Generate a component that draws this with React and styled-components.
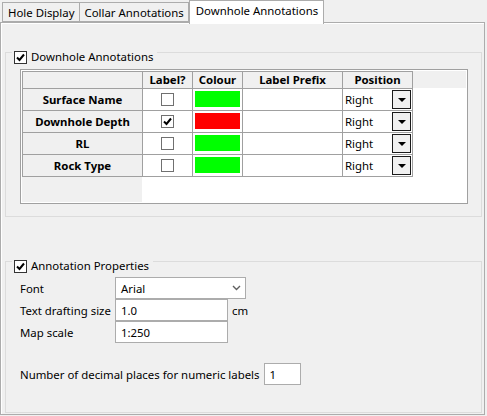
import styled, { createGlobalStyle } from "styled-components";

const GlobalStyle = createGlobalStyle`
  html, body {
    margin: 0;
    padding: 0;
    background: #f0f0f0;
  }
  body {
    font-family: "Noto Sans", "DejaVu Sans", sans-serif;
    font-size: 11.4px;
    color: #000;
  }
`;

const columns = ["", "Label?", "Colour", "Label Prefix", "Position"];

const rows = [
  { name: "Surface Name", checked: false, colour: "#00ff00" },
  { name: "Downhole Depth", checked: true, colour: "#ff0000" },
  { name: "RL", checked: false, colour: "#00ff00" },
  { name: "Rock Type", checked: false, colour: "#00ff00" },
];

const CheckMark = () => (
  <svg width="9" height="9" viewBox="0 0 9 9">
    <path d="M1 4.5 L3.5 7 L8 1.5" fill="none" stroke="#000" strokeWidth="2" />
  </svg>
);

const DownTriangle = () => (
  <svg width="8" height="4" viewBox="0 0 8 4">
    <path d="M0 0 H8 L4 4 Z" fill="#000" />
  </svg>
);

const Chevron = () => (
  <svg width="9" height="6" viewBox="0 0 9 6">
    <path d="M1 1 L4.5 4.5 L8 1" fill="none" stroke="#606060" strokeWidth="1.4" />
  </svg>
);

const App = () => {
  return (
    <Window>
      <GlobalStyle />
      <TabBar>
        <Tab>Hole Display</Tab>
        <Tab>Collar Annotations</Tab>
        <Tab $active>Downhole Annotations</Tab>
      </TabBar>
      <Panel>
        <GroupBox $top={29} $pad="16px 14px 12px 14px">
          <GroupTitle>
            <CheckBox $dark>
              <CheckMark />
            </CheckBox>
            Downhole Annotations
          </GroupTitle>
          <GridFrame>
            <DataGrid>
              {columns.map((c, i) => (
                <HeadCell key={i} $right={i === 4}>
                  {c}
                </HeadCell>
              ))}
              <Filler $gray />
              {rows.map((r, i) => {
                const last = i === rows.length - 1;
                return [
                  <RowHead key={r.name} $last={last}>
                    {r.name}
                  </RowHead>,
                  <Cell key={r.name + "-l"} $last={last} $center>
                    <CheckBox>{r.checked && <CheckMark />}</CheckBox>
                  </Cell>,
                  <Cell key={r.name + "-c"} $last={last} $pad="2px 2px 3px 2px">
                    <Swatch $colour={r.colour} />
                  </Cell>,
                  <Cell key={r.name + "-p"} $last={last} />,
                  <Cell key={r.name + "-s"} $last={last} $right $pad="0 1px 0 2px">
                    Right
                    <DropButton>
                      <DownTriangle />
                    </DropButton>
                  </Cell>,
                  <Filler key={r.name + "-f"} />,
                ];
              })}
              <Filler $gray />
              <Filler $span={5} />
            </DataGrid>
          </GridFrame>
        </GroupBox>

        <GroupBox $top={44} $pad="15px 14px 0 14px" $grow>
          <GroupTitle>
            <CheckBox $dark>
              <CheckMark />
            </CheckBox>
            Annotation Properties
          </GroupTitle>
          <Form>
            <FieldRow>
              <FieldLabel $width={95}>Font</FieldLabel>
              <Select>
                Arial
                <Chevron />
              </Select>
            </FieldRow>
            <FieldRow>
              <FieldLabel $width={95}>Text drafting size</FieldLabel>
              <TextBox $width={113}>1.0</TextBox>
              <Unit>cm</Unit>
            </FieldRow>
            <FieldRow>
              <FieldLabel $width={95}>Map scale</FieldLabel>
              <TextBox $width={113}>1:250</TextBox>
            </FieldRow>
          </Form>
          <DecimalRow>
            <FieldLabel>Number of decimal places for numeric labels</FieldLabel>
            <TextBox $width={37}>1</TextBox>
          </DecimalRow>
        </GroupBox>
      </Panel>
    </Window>
  );
};

const Window = styled.div`
  width: 487px;
  height: 416px;
  overflow: hidden;
`;

const TabBar = styled.div`
  display: flex;
  align-items: flex-end;
  height: 22px;
  padding-left: 2px;
  position: relative;
  z-index: 1;
`;

const Tab = styled.div`
  box-sizing: border-box;
  height: ${(p) => (p.$active ? "24px" : "20px")};
  margin-bottom: ${(p) => (p.$active ? "-2px" : "0")};
  padding: ${(p) => (p.$active ? "2px 5px 0 6px" : "2px 4px 0 5px")};
  border: 1px solid #acacac;
  border-bottom: ${(p) => (p.$active ? "none" : "1px solid #acacac")};
  border-left: ${(p) => (p.$active ? "1px solid #acacac" : "none")};
  background: ${(p) => (p.$active ? "#ffffff" : "#f0f0f0")};
  white-space: nowrap;
  line-height: 16px;

  &:first-child {
    border-left: 1px solid #acacac;
  }
`;

const Panel = styled.div`
  box-sizing: border-box;
  width: 485px;
  height: 393px;
  border: 1px solid #acacac;
  box-shadow: inset 1px 1px 0 #ffffff;
  padding: 0 2px 1px 4px;
  display: flex;
  flex-direction: column;
`;

const GroupBox = styled.div`
  position: relative;
  box-sizing: border-box;
  margin-top: ${(p) => p.$top}px;
  padding: ${(p) => p.$pad};
  border: 1px solid #dcdcdc;
  flex: ${(p) => (p.$grow ? "1" : "none")};
`;

const GroupTitle = styled.div`
  position: absolute;
  top: -4px;
  left: 6px;
  display: flex;
  align-items: center;
  gap: 4px;
  height: 16px;
  padding: 0 4px 0 2px;
  background: #f0f0f0;
  line-height: 16px;
`;

const CheckBox = styled.span`
  box-sizing: border-box;
  display: inline-flex;
  align-items: center;
  justify-content: center;
  width: 13px;
  height: 13px;
  border: 1px solid ${(p) => (p.$dark ? "#333333" : "#707070")};
  background: #ffffff;
`;

const GridFrame = styled.div`
  box-sizing: border-box;
  width: 448px;
  height: 135px;
  border: 1px solid #a0a0a0;
  padding: 1px;
  background: #ffffff;
`;

const DataGrid = styled.div`
  display: grid;
  height: 100%;
  grid-template-columns: 120px 50px 50px 100px 71px 1fr;
  grid-template-rows: 17px 22px 22px 22px 23px 1fr;
`;

const cellBorders = (p) => `
  border-left: 1px solid #a0a0a0;
  border-top: 1px solid #a0a0a0;
  ${p.$right ? "border-right: 1px solid #a0a0a0;" : ""}
  ${p.$last ? "border-bottom: 1px solid #a0a0a0;" : ""}
`;

const HeadCell = styled.div`
  box-sizing: border-box;
  ${cellBorders}
  background: #f0f0f0;
  font-weight: bold;
  text-align: center;
  line-height: 15px;
`;

const RowHead = styled.div`
  box-sizing: border-box;
  ${cellBorders}
  display: flex;
  align-items: center;
  justify-content: center;
  background: #f0f0f0;
  font-weight: bold;
`;

const Cell = styled.div`
  box-sizing: border-box;
  ${cellBorders}
  display: flex;
  align-items: center;
  justify-content: ${(p) => (p.$center ? "center" : "space-between")};
  padding: ${(p) => p.$pad || "0"};
  background: #ffffff;
`;

const Filler = styled.div`
  grid-column: span ${(p) => p.$span || 1};
  background: ${(p) => (p.$gray ? "#f0f0f0" : "#ffffff")};
`;

const Swatch = styled.div`
  align-self: stretch;
  flex: 1;
  background: ${(p) => p.$colour};
`;

const DropButton = styled.span`
  box-sizing: border-box;
  display: inline-flex;
  align-items: center;
  justify-content: center;
  width: 19px;
  height: 19px;
  border: 1px solid #1a1a1a;
  background: #f0f0f0;
`;

const Form = styled.div`
  display: flex;
  flex-direction: column;
`;

const FieldRow = styled.div`
  display: flex;
  align-items: center;
  gap: 4px;
  height: 22px;
`;

const FieldLabel = styled.span`
  white-space: nowrap;
  ${(p) => (p.$width ? `width: ${p.$width - 4}px;` : "")}
`;

const Select = styled.div`
  box-sizing: border-box;
  width: 131px;
  height: 22px;
  display: flex;
  align-items: center;
  justify-content: space-between;
  padding: 0 4px 0 5px;
  border: 1px solid #acacac;
  background: #ffffff;
`;

const TextBox = styled.div`
  box-sizing: border-box;
  width: ${(p) => p.$width}px;
  height: 22px;
  display: flex;
  align-items: center;
  padding-left: 5px;
  border: 1px solid #acacac;
  background: #ffffff;
`;

const Unit = styled.span``;

const DecimalRow = styled.div`
  display: flex;
  align-items: center;
  gap: 4px;
  margin-top: 20px;
`;

export default App;
